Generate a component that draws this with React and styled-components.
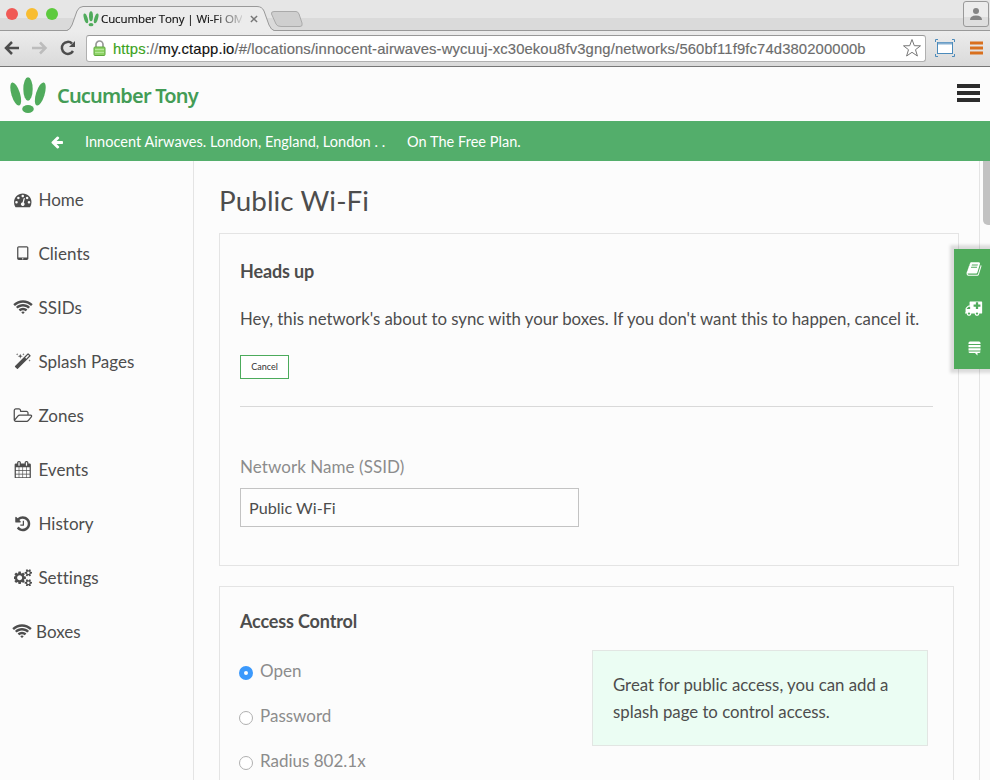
import React from 'react';
import styled, { createGlobalStyle } from 'styled-components';

const Global = createGlobalStyle`
  * { box-sizing: border-box; }
  body { margin: 0; overflow: hidden; background: #fcfcfc; font-family: Lato, sans-serif; color: #4d4d4d; }
`;

const Window = styled.div`
  position: relative;
  width: 990px;
  height: 780px;
  overflow: hidden;
  display: flex;
  flex-direction: column;
`;

/* Browser chrome */
const TabStrip = styled.div`
  height: 31px;
  flex: none;
  display: flex;
  background: linear-gradient(#e6e6e6 0 18px, #dadada 18px 30px, #999 30px);
`;
const Lights = styled.div`
  display: flex;
  gap: 8px;
  padding: 8px 0 0 6px;
  width: 66px;
`;
const Light = styled.i`
  width: 12px;
  height: 12px;
  border-radius: 50%;
  background: ${(p) => p.$color};
`;
const TabShape = styled.div`
  position: relative;
  width: 206px;
  height: 31px;
  display: flex;
  align-items: center;
  padding: 7px 0 0 17px;
`;
const Backdrop = styled.svg`
  position: absolute;
  left: 0;
  top: 0;
`;
const TabTitle = styled.span`
  position: relative;
  flex: none;
  margin: -1px 8px 0 2px;
  width: 141px;
  white-space: nowrap;
  font: 11.5px/16px "Open Sans", sans-serif;
  letter-spacing: -0.1px;
  color: #111;
  -webkit-text-stroke: 0.15px #111;
  mask-image: linear-gradient(90deg, #000 112px, transparent 146px);
`;
const TabIcon = styled.svg`
  position: relative;
  flex: none;
`;
const NewTab = styled.svg`
  margin: 10px 0 0 -3px;
`;
const Profile = styled.div`
  margin: 1px 1px 0 auto;
  width: 26px;
  height: 26px;
  border: 1px solid #999;
  border-radius: 3px;
  background: linear-gradient(#ececec 64%, #dedede 64%);
  display: flex;
  align-items: center;
  justify-content: center;
`;
const Toolbar = styled.div`
  height: 36px;
  flex: none;
  display: flex;
  align-items: center;
  padding: 0 6px 1px 4px;
  background: linear-gradient(#ececec, #dadada);
  border-bottom: 1px solid #777;
`;
const NavIcons = styled.div`
  width: 82px;
  height: 18px;
  display: flex;
`;
const Address = styled.div`
  width: 840px;
  height: 27px;
  border: 1px solid #b0b0b0;
  border-top-color: #999;
  border-radius: 3px;
  background: #fff;
  display: flex;
  align-items: center;
  padding: 0 3px 0 6px;
`;
const Url = styled.div`
  flex: 1;
  margin: 1px 0 0 7px;
  white-space: nowrap;
  font: 14.8px/20px "Liberation Sans", sans-serif;
  letter-spacing: 0.13px;
  color: #6c6c6c;
  -webkit-text-stroke: 0.15px;
`;
const UrlPart = styled.span`
  color: ${(p) => p.$color};
`;
const Extensions = styled.div`
  display: flex;
  align-items: center;
  gap: 15px;
  margin-left: 9px;
`;

/* Application */
const Header = styled.header`
  height: 54px;
  flex: none;
  display: flex;
  align-items: center;
  padding: 3px 10px 0 9px;
`;
const Brand = styled.span`
  margin: 1px auto 0 10px;
  font: 600 20px/28px "Noto Sans", sans-serif;
  letter-spacing: -0.83px;
  color: #439c56;
`;
const Burger = styled.div`
  width: 23px;
  height: 18px;
  margin-bottom: 5px;
  background: repeating-linear-gradient(#2c2c2c 0 4px, transparent 4px 7px);
`;
const PlanBar = styled.div`
  height: 40px;
  flex: none;
  display: flex;
  align-items: center;
  padding: 2px 0 0 50px;
  background: #53ae6b;
  color: #fff;
  font-size: 14.5px;
  white-space: pre;
`;
const PlanText = styled.span`
  margin-left: ${(p) => p.$gap}px;
  margin-top: -1px;
  letter-spacing: 0.03px;
`;
const Body = styled.div`
  flex: 1;
  min-height: 0;
  display: flex;
`;
const Sidebar = styled.nav`
  width: 194px;
  flex: none;
  border-right: 1px solid #e4e4e4;
  padding: 11px 0 0 12px;
`;
const NavItem = styled.a`
  height: 54px;
  display: flex;
  align-items: center;
  font-size: 17px;
  letter-spacing: 0.04px;
  gap: ${(p) => (p.$tight ? 3 : 4.4)}px;
  margin-left: ${(p) => (p.$tight ? -1 : 0)}px;
`;
const IconSlot = styled.span`
  width: 22px;
  height: 20px;
  margin-top: 1px;
  display: flex;
  align-items: center;
  justify-content: center;
`;
const Main = styled.main`
  width: 786px;
  flex: none;
  padding: 0 0 0 25px;
  border-right: 1px solid #e4e4e4;
`;
const Title = styled.h1`
  margin: 0;
  padding-top: 23px;
  height: 72px;
  font: 400 27.8px/34px Lato, sans-serif;
  letter-spacing: 0.1px;
`;
const Card = styled.section`
  width: ${(p) => p.$width}px;
  height: 333px;
  margin-bottom: 20px;
  border: 1px solid #e4e4e4;
  padding: ${(p) => p.$top}px 20px 0;
`;
const CardTitle = styled.h2`
  margin: 0;
  font: 700 18px/24px Lato, sans-serif;
  letter-spacing: -0.15px;
`;
const Message = styled.p`
  margin: 23px 0 0;
  font-size: 16.8px;
  line-height: 25px;
  white-space: nowrap;
`;
const CancelButton = styled.button`
  display: block;
  margin: 24px 0 0;
  width: 49px;
  height: 24px;
  padding: 0;
  border: 1px solid #4cab5c;
  background: #fff;
  color: #333;
  font: 9px/12px Lato, sans-serif;
`;
const Rule = styled.hr`
  width: 693px;
  margin: 27px 0 0;
  border: 0;
  border-top: 1px solid #d9d9d9;
`;
const FieldLabel = styled.label`
  display: block;
  margin-top: 48px;
  font-size: 17px;
  line-height: 24px;
  letter-spacing: 0.06px;
  color: #8c8c8c;
`;
const Field = styled.input`
  display: block;
  width: 339px;
  height: 39px;
  margin-top: 9px;
  padding: 0 8px;
  border: 1px solid #c3c3c3;
  background: #fdfdfd;
  color: #4d4d4d;
  font: 16.2px Lato, sans-serif;
`;
const Columns = styled.div`
  display: flex;
  justify-content: space-between;
  padding-right: 5px;
`;
const Options = styled.div`
  padding-top: 15px;
`;
const Option = styled.label`
  display: flex;
  align-items: center;
  height: 45px;
  margin-left: -1px;
  font-size: 17px;
  color: #8c8c8c;
`;
const Radio = styled.i`
  width: 14px;
  height: 14px;
  margin: 4px 7px 0 0;
  border-radius: 50%;
  border: ${(p) => (p.$on ? '5px solid #3b99fc' : '1px solid #b0b0b0')};
  background: #fff;
`;
const Hint = styled.aside`
  width: 336px;
  height: 96px;
  margin-top: 17px;
  padding: 20px 20px;
  border: 1px solid #e2e6e3;
  background: #ebfdf3;
  font-size: 16.8px;
  line-height: 27px;
`;
const ScrollThumb = styled.div`
  width: 7px;
  height: 64px;
  margin-left: 3px;
  border-radius: 0 0 0 5px;
  background: #c2c2c2;
`;
const Dock = styled.div`
  position: absolute;
  right: 0;
  top: 249px;
  width: 36px;
  height: 120px;
  display: flex;
  flex-direction: column;
  background: #50ab5c;
  color: #fff;
  box-shadow: 0 0 3px 4px rgba(0, 0, 0, 0.13);
`;
const DockItem = styled.div`
  height: 40px;
  display: flex;
  align-items: center;
  justify-content: center;
  padding: 0 0 1px 4px;
`;

const paths = {
  history: 'M1664 896q0 156-61 298t-164 245-245 164-298 61q-172 0-327-72.5t-264-204.5q-7-10-6.5-22.5t8.5-20.5l137-138q10-9 25-9 16 2 23 12 73 95 179 147t225 52q104 0 198.5-40.5t163.5-109.5 109.5-163.5 40.5-198.5-40.5-198.5-109.5-163.5-163.5-109.5-198.5-40.5q-98 0-188 35.5t-160 101.500l137 138q31 30 14 69-17 40-59 40h-448q-26 0-45-19t-19-45v-448q0-42 40-59 39-17 69 14l130 129q107-101 244.500-156.500t284.500-55.500q156 0 298 61t245 164 164 245 61 298zm-640-288v448q0 14-9 23t-23 9h-320q-14 0-23-9t-9-23v-64q0-14 9-23t23-9h224v-352q0-14 9-23t23-9h64q14 0 23 9t9 23z',
  arrow: 'M1664 896v128q0 53-32.500 90.500t-84.500 37.500h-704l293 294q38 36 38 90t-38 90l-75 76q-37 37-90 37-52 0-91-37l-651-652q-37-37-37-90 0-52 37-91l651-650q38-38 91-38 52 0 90 38l75 74q38 38 38 91t-38 91l-293 293h704q52 0 84.500 37.500t32.500 90.500z',
  gauge: 'M384 1152q0-53-37.500-90.500t-90.500-37.500-90.500 37.500-37.500 90.500 37.500 90.500 90.500 37.500 90.500-37.500 37.500-90.500zm192-448q0-53-37.500-90.500t-90.500-37.500-90.500 37.500-37.500 90.500 37.500 90.500 90.500 37.500 90.500-37.500 37.500-90.500zm428 481l101-382q6-26-7.500-48.500t-38.500-29.500-48 6.500-30 39.500l-101 382q-60 5-107 43.500t-63 98.500q-20 77 20 146t117 89 146-20 89-117q16-60-6-117t-72-91zm660-33q0-53-37.500-90.500t-90.500-37.500-90.500 37.500-37.500 90.500 37.500 90.500 90.500 37.500 90.500-37.500 37.500-90.500zm-640-640q0-53-37.500-90.500t-90.500-37.500-90.500 37.500-37.500 90.500 37.500 90.500 90.500 37.500 90.500-37.500 37.500-90.500zm448 192q0-53-37.500-90.500t-90.500-37.500-90.500 37.500-37.500 90.500 37.500 90.500 90.500 37.500 90.500-37.500 37.500-90.500zm320 448q0 261-141 483-19 29-54 29h-1402q-35 0-54-29-141-221-141-483 0-182 71-348t191-286 286-191 348-71 348 71 286 191 191 286 71 348z',
  tablet: 'M960 1408q0-26-19-45t-45-19-45 19-19 45 19 45 45 19 45-19 19-45zm384-160v-960q0-13-9.500-22.500t-22.500-9.500h-832q-13 0-22.500 9.500t-9.500 22.500v960q0 13 9.500 22.500t22.500 9.500h832q13 0 22.500-9.500t9.500-22.500zm128-960v1088q0 66-47 113t-113 47h-832q-66 0-113-47t-47-113v-1088q0-66 47-113t113-47h832q66 0 113 47t47 113z',
  wifi: 'M1024 1523q-20 0-93-73.5t-73-93.5q0-32 62.5-54t103.5-22 103.500 22 62.500 54q0 20-73 93.500t-93 73.500zm270-271q-2 0-40-25t-101.500-50-128.500-25-128.500 25-101 50-40.500 25q-18 0-93.500-75t-75.500-93q0-13 10-23 78-77 196-121t233-44 233 44 196 121q10 10 10 23 0 18-75.500 93t-93.500 75zm273-272q-11 0-23-8-136-105-252-154.500t-268-49.500q-85 0-170.500 22t-149 53-113.500 62-79 53-31 22q-17 0-92-75t-75-93q0-12 10-22 132-132 320-205t380-73 380 73 320 205q10 10 10 22 0 18-75 93t-92 75zm271-271q-11 0-22-9-179-157-371.500-236.500t-420.500-79.500-420.500 79.500-371.500 236.500q-11 9-22 9-17 0-92.500-75t-75.500-93q0-13 10-23 187-186 445-288t527-102 527 102 445 288q10 10 10 23 0 18-75.500 93t-92.500 75z',
  magic: 'M1254 581l293-293-107-107-293 293zm447-293q0 27-18 45l-1286 1286q-18 18-45 18t-45-18l-198-198q-18-18-18-45t18-45l1286-1286q18-18 45-18t45 18l198 198q18 18 18 45zm-1351-190l98 30-98 30-30 98-30-98-98-30 98-30 30-98zm350 162l196 60-196 60-60 196-60-196-196-60 196-60 60-196zm930 478l98 30-98 30-30 98-30-98-98-30 98-30 30-98zm-640-640l98 30-98 30-30 98-30-98-98-30 98-30 30-98z',
  folder: 'M1845 931q0-35-53-35h-1088q-40 0-85.500 21.500t-71.500 52.500l-294 363q-18 24-18 40 0 35 53 35h1088q40 0 86-22t71-53l294-363q18-22 18-39zm-1141-163h768v-160q0-40-28-68t-68-28h-576q-40 0-68-28t-28-68v-64q0-40-28-68t-68-28h-320q-40 0-68 28t-28 68v853l256-315q44-53 116-87.500t140-34.500zm1269 163q0 62-46 120l-295 363q-43 53-116 87.500t-140 34.500h-1088q-92 0-158-66t-66-158v-960q0-92 66-158t158-66h320q92 0 158 66t66 158v32h544q92 0 158 66t66 158v160h192q54 0 99 24.500t67 70.500q15 32 15 68z',
  calendar: 'M192 1664h288v-288h-288v288zm352 0h320v-288h-320v288zm-352-352h288v-320h-288v320zm352 0h320v-320h-320v320zm-352-384h288v-288h-288v288zm736 736h320v-288h-320v288zm-384-736h320v-288h-320v288zm768 736h288v-288h-288v288zm-384-352h320v-320h-320v320zm-352-864v-288q0-13-9.500-22.500t-22.500-9.500h-64q-13 0-22.500 9.500t-9.500 22.500v288q0 13 9.500 22.500t22.500 9.500h64q13 0 22.500-9.500t9.500-22.500zm736 864h288v-320h-288v320zm-384-384h320v-288h-320v288zm384 0h288v-288h-288v288zm32-480v-288q0-13-9.500-22.500t-22.500-9.500h-64q-13 0-22.500 9.500t-9.500 22.500v288q0 13 9.500 22.500t22.500 9.500h64q13 0 22.500-9.500t9.500-22.500zm384-64v1280q0 52-38 90t-90 38h-1408q-52 0-90-38t-38-90v-1280q0-52 38-90t90-38h128v-96q0-66 47-113t113-47h64q66 0 113 47t47 113v96h384v-96q0-66 47-113t113-47h64q66 0 113 47t47 113v96h128q52 0 90 38t38 90z',
  cogs: 'M832 896q0-106-75-181t-181-75-181 75-75 181 75 181 181 75 181-75 75-181zm768 512q0-52-38-90t-90-38-90 38-38 90q0 53 37.500 90.500t90.500 37.500 90.500-37.500 37.500-90.500zm0-1024q0-52-38-90t-90-38-90 38-38 90q0 53 37.500 90.500t90.500 37.500 90.500-37.500 37.500-90.500zm-384 421v185q0 10-7 19.500t-16 10.500l-155 24q-11 35-32 76 34 48 90 115 7 11 7 20 0 12-7 19-23 30-82.500 89.500t-78.500 59.500q-11 0-21-7l-115-90q-37 19-77 31-11 108-23 155-7 24-30 24h-186q-11 0-20-7.500t-10-17.500l-23-153q-34-10-75-31l-118 89q-7 7-20 7-11 0-21-8-144-133-144-160 0-9 7-19 10-14 41-53t47-61q-23-44-35-82l-152-24q-10-1-17-9.500t-7-19.500v-185q0-10 7-19.500t16-10.500l155-24q11-35 32-76-34-48-90-115-7-11-7-20 0-12 7-20 22-30 82-89t79-59q11 0 21 7l115 90q34-18 77-32 11-108 23-154 7-24 30-24h186q11 0 20 7.500t10 17.500l23 153q34 10 75 31l118-89q8-7 20-7 11 0 21 8 144 133 144 160 0 8-7 19-12 16-42 54t-45 60q23 48 34 82l152 23q10 2 17 10.500t7 19.500zm640 533v140q0 16-149 31-12 27-30 52 51 113 51 138 0 4-4 7-122 71-124 71-8 0-46-47t-52-68q-20 2-30 2t-30-2q-14 21-52 68t-46 47q-2 0-124-71-4-3-4-7 0-25 51-138-18-25-30-52-149-15-149-31v-140q0-16 149-31 13-29 30-52-51-113-51-138 0-4 4-7 4-2 35-20t59-34 30-16q8 0 46 46.500t52 67.500q20-2 30-2t30 2q51-71 92-112l6-2q4 0 124 70 4 3 4 7 0 25-51 138 17 23 30 52 149 15 149 31zm0-1024v140q0 16-149 31-12 27-30 52 51 113 51 138 0 4-4 7-122 71-124 71-8 0-46-47t-52-68q-20 2-30 2t-30-2q-14 21-52 68t-46 47q-2 0-124-71-4-3-4-7 0-25 51-138-18-25-30-52-149-15-149-31v-140q0-16 149-31 13-29 30-52-51-113-51-138 0-4 4-7 4-2 35-20t59-34 30-16q8 0 46 46.500t52 67.500q20-2 30-2t30 2q51-71 92-112l6-2q4 0 124 70 4 3 4 7 0 25-51 138 17 23 30 52 149 15 149 31z',
  book: 'M1703 478q40 57 18 129l-275 906q-19 64-76.500 107.500t-122.500 43.500h-923q-77 0-148.500-53.500t-99.500-131.500q-24-67-2-127 0-4 3-27t4-37q1-8-3-21.500t-3-19.500q2-11 8-21t16.500-23.500 16.500-23.500q23-38 45-91.500t30-91.500q3-10 .5-30t-.5-28q3-11 17-28t17-23q21-36 42-92t25-90q1-9-2.500-32t.5-28q4-13 22-30.500t22-22.500q19-26 42.500-84.500t27.500-96.500q1-8-3-25.500t-2-26.500q2-8 9-18t18-23 17-21q8-12 16.500-30.500t15-35 16-36 19.500-32 26.500-23.500 36-11.500 47.500 5.500l-1 3q38-9 51-9h761q74 0 114 56t18 130l-274 906q-36 119-71.500 153.500t-128.500 34.500h-869q-27 0-38 15-11 16-1 43 24 70 144 70h923q29 0 56-15.500t35-41.500l300-987q7-22 5-57 38 15 59 43zm-1064 2q-4 13 2 22.500t20 9.500h608q13 0 25.500-9.500t16.500-22.500l21-64q4-13-2-22.500t-20-9.500h-608q-13 0-25.500 9.500t-16.500 22.500zm-83 256q-4 13 2 22.500t20 9.500h608q13 0 25.500-9.500t16.500-22.500l21-64q4-13-2-22.500t-20-9.500h-608q-13 0-25.500 9.500t-16.500 22.500z',
  ambulance: 'M576 1408q0-52-38-90t-90-38-90 38-38 90 38 90 90 38 90-38 38-90zm-384-512h384v-256h-158q-14 2-22 9l-195 195q-7 12-9 22v30zm1280 512q0-52-38-90t-90-38-90 38-38 90 38 90 90 38 90-38 38-90zm256-800v-192q0-14-9-23t-23-9h-224v-224q0-14-9-23t-23-9h-192q-14 0-23 9t-9 23v224h-224q-14 0-23 9t-9 23v192q0 14 9 23t23 9h224v224q0 14 9 23t23 9h192q14 0 23-9t9-23v-224h224q14 0 23-9t9-23zm192-480v1216q0 26-19 45t-45 19h-256q0 106-75 181t-181 75-181-75-75-181h-384q0 106-75 181t-181 75-181-75-75-181h-128q-26 0-45-19t-19-45 19-45 45-19v-416q0-26 13-58t32-51l198-198q19-19 51-32t58-13h96v-384q0-26 19-45t45-19h1280q26 0 45 19t19 45z',
};

const Glyph = ({ name, size, w = 1792 }) => (
  <svg width={(size * w) / 1792} height={size} viewBox={`0 0 ${w} 1792`} fill="currentColor">
    <path d={paths[name]} fillRule={name === 'ambulance' ? 'evenodd' : 'nonzero'} />
  </svg>
);
const Leaves = () => (
  <g fill="#50ab5c">
    <ellipse cx="19" cy="12" rx="4.700" ry="11.800" />
    <ellipse cx="6.700" cy="17" rx="4.300" ry="12" transform="rotate(-17 6.700 17)" />
    <ellipse cx="31.300" cy="17" rx="4.300" ry="12" transform="rotate(17 31.300 17)" />
    <ellipse cx="19" cy="32" rx="5.800" ry="4" />
  </g>
);

const nav = [
  ['Home', 'gauge', 1792],
  ['Clients', 'tablet', 1792],
  ['SSIDs', 'wifi', 2048],
  ['Splash Pages', 'magic', 1792],
  ['Zones', 'folder', 2048],
  ['Events', 'calendar', 1792],
  ['History', 'history', 1792],
  ['Settings', 'cogs', 1920],
  ['Boxes', 'wifi', 2048],
];

export default function App() {
  return (
    <Window>
      <Global />
      <TabStrip>
        <Lights>
          <Light $color="#f05a56" />
          <Light $color="#f8bd31" />
          <Light $color="#5dca3e" />
        </Lights>
        <TabShape>
          <Backdrop width="210" height="31" viewBox="0 0 210 31">
            <path d="M0 31Q4 30 6 25L11 11Q13 6.500 17 6.500H191Q196 6.500 198 11L203 25Q205 30 209 31" fill="#ececec" stroke="#999" />
          </Backdrop>
          <TabIcon width="16" height="16" viewBox="0 0 38 37"><Leaves /></TabIcon>
          <TabTitle>Cucumber Tony | Wi-Fi OM</TabTitle>
          <TabIcon width="8" height="8" viewBox="0 0 9 9" stroke="#777" strokeWidth="1.600"><path d="M1 1l7 7M8 1L1 8" /></TabIcon>
        </TabShape>
        <NewTab width="36" height="18" viewBox="0 0 36 18">
          <path d="M5 1.500H27Q29 1.500 30 4L33 13Q34 16.500 31 16.500H12Q8 16.500 7 14L2.500 4Q2 1.500 5 1.500Z" fill="#cfcfcf" stroke="#aaa" />
        </NewTab>
        <Profile>
          <svg width="14" height="14" viewBox="0 0 14 14" fill="#858585"><circle cx="7" cy="4" r="3" /><path d="M1 13Q1 8.500 7 8.500T13 13Z" /></svg>
        </Profile>
      </TabStrip>
      <Toolbar>
        <NavIcons>
          <svg width="76" height="18" viewBox="0 0 76 18" fill="none" strokeWidth="2.500">
            <path d="M15 9H2M8 3L2 9l6 6" stroke="#4d4d4d" />
            <path d="M28 9h13M36 3.500L41.500 9 36 14.500" stroke="#bcbcbc" />
            <path d="M69 12A6 6 0 1 1 68 4.500" stroke="#4d4d4d" />
            <path d="M71 2v6h-6z" fill="#4d4d4d" />
          </svg>
        </NavIcons>
        <Address>
          <svg width="13" height="16" viewBox="0 0 13 16">
            <path d="M3 8V4.500a3.500 3.500 0 0 1 7 0V8" fill="none" stroke="#999" strokeWidth="1.700" />
            <rect x="1" y="7" width="11" height="8.500" rx="1" fill="#8fd367" stroke="#5fa83e" />
            <path d="M2 9.500h9M2 12.500h9" stroke="#b4e69a" />
          </svg>
          <Url><UrlPart $color="#3ca31c">https</UrlPart>://<UrlPart $color="#111">my.ctapp.io</UrlPart>/#/locations/innocent-airwaves-wycuuj-xc30ekou8fv3gng/networks/560bf11f9fc74d380200000b</Url>
          <svg width="20" height="20" viewBox="0 0 20 20" fill="#fff" stroke="#777" strokeLinejoin="round">
            <path d="M10 1.500l2.300 6.200 6.200.1-5 3.900 1.900 6.300-5.400-3.700L4.600 18l1.900-6.300-5-3.900 6.200-.1z" />
          </svg>
        </Address>
        <Extensions>
          <svg width="20" height="18" viewBox="0 0 20 18" fill="none" stroke="#4c8bbb">
            <path d="M.5 3V.500H3M17 .500h2.500V3M.5 15v2.500H3M17 17.500h2.500V15" />
            <rect x="2.500" y="3.500" width="15" height="11" fill="#fff" /><path d="M3 4.500h14" stroke="#86afd0" strokeWidth="2" />
          </svg>
          <svg width="13" height="14" viewBox="0 0 13 14" stroke="#d9701e" strokeWidth="3"><path d="M0 2h13M0 7h13M0 12h13" /></svg>
        </Extensions>
      </Toolbar>
      <Header>
        <svg width="38" height="37" viewBox="0 0 38 37"><Leaves /></svg>
        <Brand>Cucumber Tony</Brand>
        <Burger />
      </Header>
      <PlanBar>
        <Glyph name="arrow" size={14} />
        <PlanText $gap={21}>Innocent Airwaves. London, England, London . .</PlanText>
        <PlanText $gap={22}>On The Free Plan.</PlanText>
      </PlanBar>
      <Body>
        <Sidebar>
          {nav.map(([label, icon, w]) => (
            <NavItem key={label} $tight={label === 'Boxes'}>
              <IconSlot><Glyph name={icon} size={17.5} w={w} /></IconSlot>
              {label}
            </NavItem>
          ))}
        </Sidebar>
        <Main>
          <Title>Public Wi-Fi</Title>
          <Card $width={740} $top={25}>
            <CardTitle>Heads up</CardTitle>
            <Message>Hey, this network's about to sync with your boxes. If you don't want this to happen, cancel it.</Message>
            <CancelButton>Cancel</CancelButton>
            <Rule />
            <FieldLabel>Network Name (SSID)</FieldLabel>
            <Field defaultValue="Public Wi-Fi" />
          </Card>
          <Card $width={735} $top={22}>
            <CardTitle>Access Control</CardTitle>
            <Columns>
              <Options>
                <Option><Radio $on />Open</Option>
                <Option><Radio />Password</Option>
                <Option><Radio />Radius 802.1x</Option>
              </Options>
              <Hint>Great for public access, you can add a splash page to control access.</Hint>
            </Columns>
          </Card>
        </Main>
        <ScrollThumb />
      </Body>
      <Dock>
        <DockItem><Glyph name="book" size={16} /></DockItem>
        <DockItem><Glyph name="ambulance" size={16} w={1920} /></DockItem>
        <DockItem>
          <svg width="13" height="15" viewBox="0 0 13 15" fill="#fff">
            <path d="M0.500 3V2Q.5.500 2 .500H11Q12.500.500 12.500 2V3ZM.5 4H12.500V6.200H.5ZM.5 7.200H12.500V9.400H.5ZM.5 10.400H12.500Q12.500 12 11 12H9.500V14.500L7 12H2Q.5 12 .5 10.400Z" />
          </svg>
        </DockItem>
      </Dock>
    </Window>
  );
}
